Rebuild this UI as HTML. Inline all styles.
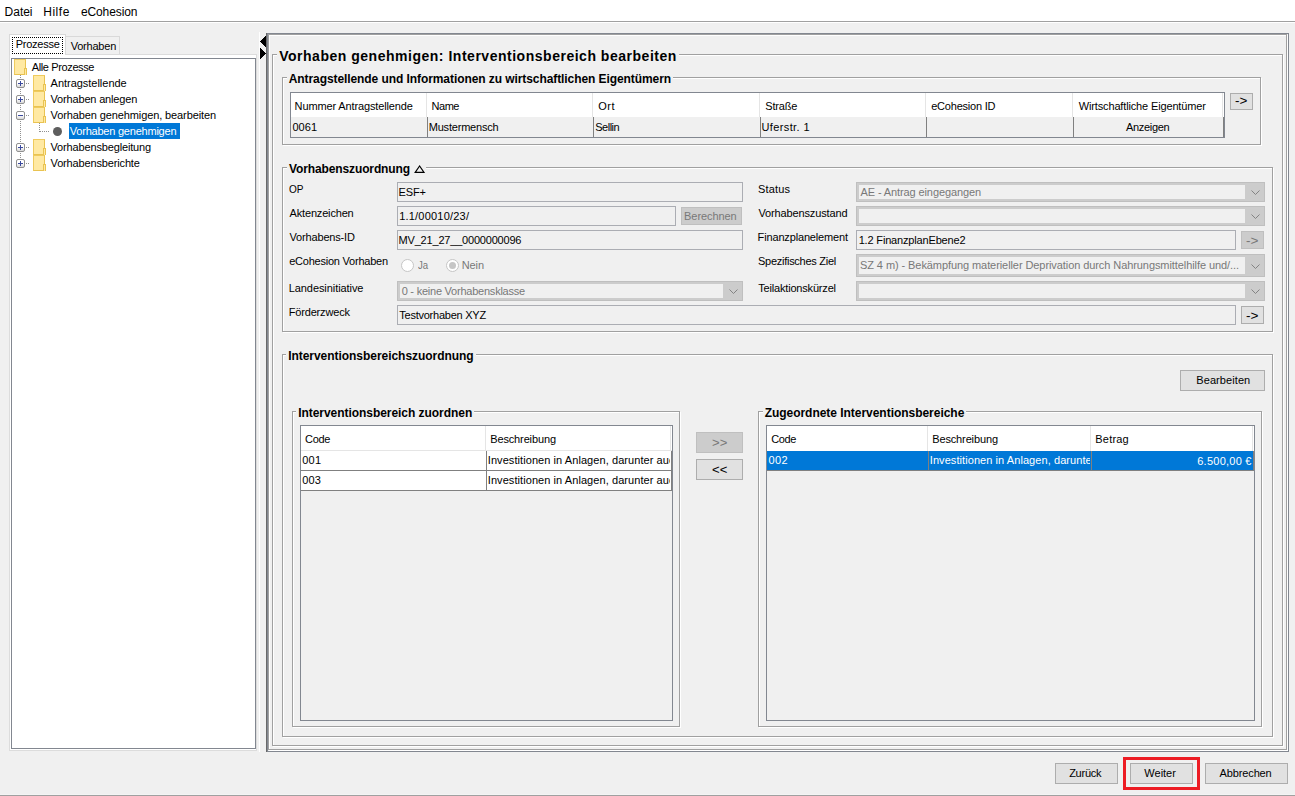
<!DOCTYPE html>
<html><head><meta charset="utf-8"><title>eCohesion</title>
<style>
*,*:before,*:after{box-sizing:border-box;margin:0;padding:0}
html,body{width:1295px;height:796px;overflow:hidden;background:#f0f0f0}
body{position:relative;font-family:"Liberation Sans",sans-serif;font-size:11px;color:#000}
.a{position:absolute}
.t{position:absolute;white-space:nowrap;line-height:14px;height:14px;font-size:11px}
.m{font-size:12px}
.b12{font-weight:bold;font-size:12px;background:#f0f0f0;padding:0 2px;margin-left:-2px}
.b14{font-weight:bold;font-size:14px;background:#f0f0f0;padding:0 2px;margin-left:-2px;line-height:16px;height:16px}
.dis{color:#787878}
.w{color:#fff}
/* etched group box: gray outer (top/left), white inner; bottom/right gray inner white outer */
.g{position:absolute;border:1px solid #a0a0a0;box-shadow:inset 1px 1px 0 #fff,1px 1px 0 #fff}
.fld{position:absolute;border:1px solid #abadb3;background:#f0f0f0}
.btn{position:absolute;border:1px solid #adadad;background:#e1e1e1}
.btnd{position:absolute;border:1px solid #bfbfbf;background:#cccccc}
.cmb{position:absolute;border:1px solid #bfbfbf;background:#cccccc}
.cmb i{position:absolute;left:2px;top:2px;bottom:2px;right:19px;background:#f0f0f0}
.cmb svg{position:absolute;right:4px;top:8px}
.tbl{position:absolute;border:1px solid #828790;background:#f0f0f0}
.hd{position:absolute;background:#fff}
.vs{position:absolute;width:1px;background:#808080}
.hs{position:absolute;height:1px;background:#808080}
.vl{position:absolute;width:1px;background:#e5e5e5}
.fold{position:absolute;width:12px;height:16px;background:#ffe9a3;border:1px solid #efcb5e;border-right-color:#e9c352;border-bottom-color:#e9c352}
.fold:after{content:"";position:absolute;left:9px;top:8px;width:3px;height:7px;background:#ffe9a3;border:1px solid #e9c352;border-bottom:0}
.pm{position:absolute;width:9px;height:9px;border:1px solid #919191;border-radius:2px;background:linear-gradient(#fff 40%,#d8d8d8)}
.pm:before{content:"";position:absolute;left:1px;top:3px;width:5px;height:1px;background:#3b4a9e}
.pm.plus:after{content:"";position:absolute;left:3px;top:1px;width:1px;height:5px;background:#3b4a9e}
.dv{position:absolute;width:1px;background-image:linear-gradient(#909090 50%,transparent 50%);background-size:1px 2px}
.dh{position:absolute;height:1px;background-image:linear-gradient(90deg,#909090 50%,transparent 50%);background-size:2px 1px}
</style></head>
<body>
<div class="a" style="left:0px;top:0px;width:1295px;height:21px;background:#ffffff;"></div>
<div class="a" style="left:0px;top:21px;width:1295px;height:1px;background:#a0a0a0;"></div>
<div class="a" style="left:0px;top:22px;width:1295px;height:1px;background:#ffffff;"></div>
<div class="a" style="left:0px;top:794px;width:1295px;height:1px;background:#f4f4f4;"></div>
<div class="a" style="left:0px;top:795px;width:1295px;height:1px;background:#a0a0a0;"></div>
<div class="a" style="left:9px;top:54px;width:248px;height:697px;background:#ffffff;border:1px solid #dcdcdc"></div>
<div class="a" style="left:66px;top:36px;width:54px;height:18px;background:#f0f0f0;border:1px solid #d9d9d9;border-left:0;border-bottom:0"></div>
<div class="a" style="left:9px;top:34px;width:57px;height:21px;background:#ffffff;border:1px solid #d9d9d9;border-bottom:0"></div>
<div class="a" style="left:12px;top:37px;width:51px;height:17px;border:1px dotted #000"></div>
<div class="a" style="left:11px;top:58px;width:245px;height:691px;background:#ffffff;border:1px solid #828790"></div>
<div class="fold" style="left:14px;top:59px"></div>
<div class="fold" style="left:33px;top:75px"></div>
<div class="fold" style="left:33px;top:91px"></div>
<div class="fold" style="left:33px;top:107px"></div>
<div class="fold" style="left:33px;top:139px"></div>
<div class="fold" style="left:33px;top:155px"></div>
<div class="dv" style="left:20px;top:75px;height:84px;background-position:0 0"></div>
<div class="dh" style="left:26px;top:83px;width:4px"></div>
<div class="dh" style="left:26px;top:99px;width:4px"></div>
<div class="dh" style="left:26px;top:115px;width:4px"></div>
<div class="dh" style="left:26px;top:147px;width:4px"></div>
<div class="dh" style="left:26px;top:163px;width:4px"></div>
<div class="pm plus" style="left:16px;top:79px"></div>
<div class="pm plus" style="left:16px;top:95px"></div>
<div class="pm" style="left:16px;top:111px"></div>
<div class="pm plus" style="left:16px;top:143px"></div>
<div class="pm plus" style="left:16px;top:159px"></div>
<div class="dv" style="left:39px;top:123px;height:9px;background-position:0 0"></div>
<div class="dh" style="left:40px;top:131px;width:10px"></div>
<div class="a" style="left:53px;top:127px;width:9px;height:9px;border-radius:50%;background:#5e5e5e"></div>
<div class="a" style="left:69px;top:123px;width:111px;height:16px;background:#0078d7;"></div>
<div class="a" style="left:259px;top:32px;width:1px;height:720px;background:#ffffff;"></div>
<svg class="a" style="left:260px;top:36px" width="6" height="23" viewBox="0 0 6 23" shape-rendering="crispEdges" fill="#000"><rect x="5" y="0" width="1" height="1"/><rect x="0" y="12" width="1" height="1"/><rect x="4" y="1" width="2" height="1"/><rect x="0" y="13" width="2" height="1"/><rect x="3" y="2" width="3" height="1"/><rect x="0" y="14" width="3" height="1"/><rect x="2" y="3" width="4" height="1"/><rect x="0" y="15" width="4" height="1"/><rect x="1" y="4" width="5" height="1"/><rect x="0" y="16" width="5" height="1"/><rect x="0" y="5" width="6" height="1"/><rect x="0" y="17" width="6" height="1"/><rect x="1" y="6" width="5" height="1"/><rect x="0" y="18" width="5" height="1"/><rect x="2" y="7" width="4" height="1"/><rect x="0" y="19" width="4" height="1"/><rect x="3" y="8" width="3" height="1"/><rect x="0" y="20" width="3" height="1"/><rect x="4" y="9" width="2" height="1"/><rect x="0" y="21" width="2" height="1"/><rect x="5" y="10" width="1" height="1"/><rect x="0" y="22" width="1" height="1"/></svg>
<div class="a" style="left:266px;top:33px;width:1px;height:719px;background:#696969;"></div>
<div class="a" style="left:267px;top:33px;width:1022px;height:719px;background:#f0f0f0;border:1px solid #828790"></div>
<div class="g" style="left:268px;top:34px;width:1019px;height:716px"></div>
<div class="g" style="left:272px;top:54px;width:1011px;height:692px"></div>
<div class="g" style="left:282px;top:77px;width:979px;height:68px"></div>
<div class="g" style="left:282px;top:167px;width:991px;height:165px"></div>
<div class="g" style="left:282px;top:354px;width:991px;height:383px"></div>
<div class="g" style="left:292px;top:411px;width:388px;height:316px"></div>
<div class="g" style="left:758px;top:411px;width:504px;height:316px"></div>
<div class="a" style="left:408px;top:165px;width:18px;height:6px;background:#f0f0f0;"></div>
<svg class="a" style="left:412px;top:163px" width="16" height="12" viewBox="412 163 16 12"><path d="M415.2 172.3L419.6 166L424 172.3Z" fill="none" stroke="#000" stroke-width="1.15"/></svg>
<div class="tbl" style="left:290px;top:92px;width:935px;height:46px"></div>
<div class="a" style="left:291px;top:93px;width:933px;height:24px;background:#ffffff;"></div>
<div class="vs" style="left:427px;top:117px;height:20px"></div>
<div class="vl" style="left:426px;top:93px;height:24px"></div>
<div class="vs" style="left:593px;top:117px;height:20px"></div>
<div class="vl" style="left:592px;top:93px;height:24px"></div>
<div class="vs" style="left:760px;top:117px;height:20px"></div>
<div class="vl" style="left:759px;top:93px;height:24px"></div>
<div class="vs" style="left:926px;top:117px;height:20px"></div>
<div class="vl" style="left:925px;top:93px;height:24px"></div>
<div class="vs" style="left:1073px;top:117px;height:20px"></div>
<div class="vl" style="left:1072px;top:93px;height:24px"></div>
<div class="vs" style="left:1223px;top:117px;height:20px"></div>
<div class="vl" style="left:1222px;top:93px;height:24px"></div>
<div class="btn" style="left:1230px;top:93px;width:23px;height:17px"></div>
<div class="fld" style="left:397px;top:182px;width:346px;height:20px"></div>
<div class="fld" style="left:397px;top:206px;width:279px;height:20px"></div>
<div class="btnd" style="left:681px;top:207px;width:61px;height:18px"></div>
<div class="fld" style="left:397px;top:230px;width:346px;height:20px"></div>
<div class="a" style="left:401px;top:259px;width:13px;height:13px;border-radius:50%;border:1px solid #c6c6c6;background:#fff"></div>
<div class="a" style="left:446px;top:259px;width:13px;height:13px;border-radius:50%;border:1px solid #c6c6c6;background:#fff"></div>
<div class="a" style="left:449px;top:262px;width:7px;height:7px;border-radius:50%;background:#c6c6c6"></div>
<div class="cmb" style="left:397px;top:281px;width:346px;height:20px"><i></i><svg width="9" height="5" viewBox="0 0 9 5" style="top:7px"><path d="M0.5 0.5L4.5 4.5L8.5 0.5" fill="none" stroke="#838383" stroke-width="1"/></svg></div>
<div class="fld" style="left:397px;top:305px;width:839px;height:20px"></div>
<div class="btn" style="left:1241px;top:306px;width:23px;height:18px"></div>
<div class="cmb" style="left:856px;top:182px;width:409px;height:20px"><i></i><svg width="9" height="5" viewBox="0 0 9 5" style="top:7px"><path d="M0.5 0.5L4.5 4.5L8.5 0.5" fill="none" stroke="#838383" stroke-width="1"/></svg></div>
<div class="cmb" style="left:856px;top:206px;width:409px;height:20px"><i></i><svg width="9" height="5" viewBox="0 0 9 5" style="top:7px"><path d="M0.5 0.5L4.5 4.5L8.5 0.5" fill="none" stroke="#838383" stroke-width="1"/></svg></div>
<div class="fld" style="left:856px;top:230px;width:380px;height:20px"></div>
<div class="btnd" style="left:1241px;top:231px;width:23px;height:18px"></div>
<div class="cmb" style="left:856px;top:254px;width:409px;height:23px"><i></i><svg width="9" height="5" viewBox="0 0 9 5" style="top:9px"><path d="M0.5 0.5L4.5 4.5L8.5 0.5" fill="none" stroke="#838383" stroke-width="1"/></svg></div>
<div class="cmb" style="left:856px;top:281px;width:409px;height:20px"><i></i><svg width="9" height="5" viewBox="0 0 9 5" style="top:7px"><path d="M0.5 0.5L4.5 4.5L8.5 0.5" fill="none" stroke="#838383" stroke-width="1"/></svg></div>
<div class="btn" style="left:1180px;top:370px;width:85px;height:21px"></div>
<div class="tbl" style="left:300px;top:425px;width:373px;height:296px"></div>
<div class="a" style="left:301px;top:426px;width:371px;height:65px;background:#ffffff;"></div>
<div class="vl" style="left:485px;top:426px;height:25px"></div>
<div class="vl" style="left:670px;top:426px;height:25px"></div>
<div class="a" style="left:301px;top:450px;width:371px;height:1px;background:#e5e5e5"></div>
<div class="vs" style="left:486px;top:451px;height:40px"></div>
<div class="vs" style="left:671px;top:451px;height:40px"></div>
<div class="hs" style="left:301px;top:470px;width:371px"></div>
<div class="hs" style="left:301px;top:490px;width:371px"></div>
<div class="btnd" style="left:696px;top:432px;width:47px;height:21px"></div>
<div class="btn" style="left:696px;top:459px;width:47px;height:21px"></div>
<div class="tbl" style="left:766px;top:425px;width:489px;height:296px"></div>
<div class="a" style="left:767px;top:426px;width:487px;height:25px;background:#ffffff;"></div>
<div class="vl" style="left:927px;top:426px;height:25px"></div>
<div class="vl" style="left:1090px;top:426px;height:25px"></div>
<div class="vl" style="left:1252px;top:426px;height:25px"></div>
<div class="a" style="left:767px;top:451px;width:487px;height:19px;background:#0078d7;"></div>
<div class="hs" style="left:767px;top:470px;width:487px"></div>
<div class="vs" style="left:928px;top:451px;height:20px"></div>
<div class="vs" style="left:1091px;top:451px;height:20px"></div>
<div class="vs" style="left:1253px;top:451px;height:20px"></div>
<div class="btn" style="left:1055px;top:763px;width:63px;height:21px"></div>
<div class="btn" style="left:1130px;top:763px;width:63px;height:21px"></div>
<div class="btn" style="left:1205px;top:763px;width:83px;height:21px"></div>
<div class="a" style="left:1123px;top:757px;width:77px;height:33px;border:3px solid #ed1c24"></div>
<span id="t0" class="t m" style="left:4.62px;top:5px;letter-spacing:-0.030px;">Datei</span>
<span id="t1" class="t m" style="left:43.22px;top:5px;letter-spacing:0.528px;">Hilfe</span>
<span id="t2" class="t m" style="left:80.89px;top:5px;letter-spacing:-0.098px;">eCohesion</span>
<span id="t3" class="t " style="left:15.70px;top:37px;letter-spacing:-0.252px;">Prozesse</span>
<span id="t4" class="t " style="left:70.65px;top:39px;letter-spacing:-0.206px;">Vorhaben</span>
<span id="t5" class="t " style="left:31.78px;top:60px;letter-spacing:-0.378px;">Alle Prozesse</span>
<span id="t6" class="t " style="left:50.58px;top:76px;letter-spacing:-0.024px;">Antragstellende</span>
<span id="t7" class="t " style="left:50.55px;top:92px;letter-spacing:-0.170px;">Vorhaben anlegen</span>
<span id="t8" class="t " style="left:50.55px;top:108px;letter-spacing:-0.108px;">Vorhaben genehmigen, bearbeiten</span>
<span id="t9" class="t w" style="left:69.85px;top:124px;letter-spacing:-0.225px;">Vorhaben genehmigen</span>
<span id="t10" class="t " style="left:50.55px;top:140px;letter-spacing:-0.156px;">Vorhabensbegleitung</span>
<span id="t11" class="t " style="left:50.55px;top:156px;letter-spacing:-0.150px;">Vorhabensberichte</span>
<span id="t12" class="t b14" style="left:279.20px;top:48px;letter-spacing:0.516px;">Vorhaben genehmigen: Interventionsbereich bearbeiten</span>
<span id="t13" class="t b12" style="left:288.70px;top:72px;letter-spacing:-0.077px;">Antragstellende und Informationen zu wirtschaftlichen Eigentümern</span>
<span id="t14" class="t b12" style="left:288.92px;top:162px;letter-spacing:-0.112px;">Vorhabenszuordnung</span>
<span id="t15" class="t b12" style="left:288.20px;top:349px;letter-spacing:-0.041px;">Interventionsbereichszuordnung</span>
<span id="t16" class="t b12" style="left:298.20px;top:406px;letter-spacing:-0.047px;">Interventionsbereich zuordnen</span>
<span id="t17" class="t b12" style="left:764.64px;top:406px;letter-spacing:-0.032px;">Zugeordnete Interventionsbereiche</span>
<span id="t18" class="t " style="left:294.60px;top:99px;letter-spacing:-0.132px;">Nummer Antragstellende</span>
<span id="t19" class="t " style="left:431.50px;top:99px;letter-spacing:-0.450px;">Name</span>
<span id="t20" class="t " style="left:598.18px;top:99px;letter-spacing:0.563px;">Ort</span>
<span id="t21" class="t " style="left:765.20px;top:99px;letter-spacing:-0.144px;">Straße</span>
<span id="t22" class="t " style="left:931.23px;top:99px;letter-spacing:-0.214px;">eCohesion ID</span>
<span id="t23" class="t " style="left:1078.75px;top:99px;letter-spacing:-0.148px;">Wirtschaftliche Eigentümer</span>
<span id="t24" class="t " style="left:292.47px;top:120px;letter-spacing:0.032px;">0061</span>
<span id="t25" class="t " style="left:428.70px;top:120px;letter-spacing:-0.192px;">Mustermensch</span>
<span id="t26" class="t " style="left:595.20px;top:120px;letter-spacing:-0.478px;">Sellin</span>
<span id="t27" class="t " style="left:761.55px;top:120px;letter-spacing:0.373px;">Uferstr. 1</span>
<span id="t28" class="t " style="left:1125.98px;top:120px;letter-spacing:-0.305px;">Anzeigen</span>
<span id="t29" class="t " style="left:1234.60px;top:94px;transform:scale(1.225,1.15);transform-origin:0 8px;">-&gt;</span>
<span id="t30" class="t " style="left:289.12px;top:182px;transform:scale(0.913,1.0);transform-origin:0 8px;">OP</span>
<span id="t31" class="t " style="left:289.58px;top:206px;letter-spacing:-0.173px;">Aktenzeichen</span>
<span id="t32" class="t " style="left:289.55px;top:230px;letter-spacing:-0.172px;">Vorhabens-ID</span>
<span id="t33" class="t " style="left:289.13px;top:254px;letter-spacing:-0.222px;">eCohesion Vorhaben</span>
<span id="t34" class="t " style="left:288.70px;top:281px;letter-spacing:-0.069px;">Landesinitiative</span>
<span id="t35" class="t " style="left:288.70px;top:305px;letter-spacing:-0.167px;">Förderzweck</span>
<span id="t36" class="t " style="left:398.60px;top:185px;letter-spacing:-0.124px;">ESF+</span>
<span id="t37" class="t " style="left:399.16px;top:209px;letter-spacing:0.213px;">1.1/00010/23/</span>
<span id="t38" class="t " style="left:398.60px;top:233px;letter-spacing:-0.196px;">MV_21_27__0000000096</span>
<span id="t39" class="t dis" style="left:417.85px;top:258px;transform:scale(0.874,1.0);transform-origin:0 8px;">Ja</span>
<span id="t40" class="t dis" style="left:461.70px;top:258px;letter-spacing:-0.069px;">Nein</span>
<span id="t41" class="t dis" style="left:401.67px;top:284px;letter-spacing:-0.230px;">0 - keine Vorhabensklasse</span>
<span id="t42" class="t " style="left:399.25px;top:308px;letter-spacing:-0.241px;">Testvorhaben XYZ</span>
<span id="t43" class="t dis" style="left:684.10px;top:209px;letter-spacing:-0.074px;">Berechnen</span>
<span id="t44" class="t " style="left:758.00px;top:182px;letter-spacing:0.142px;">Status</span>
<span id="t45" class="t " style="left:758.45px;top:206px;letter-spacing:-0.132px;">Vorhabenszustand</span>
<span id="t46" class="t " style="left:757.60px;top:230px;letter-spacing:-0.154px;">Finanzplanelement</span>
<span id="t47" class="t " style="left:758.00px;top:254px;letter-spacing:-0.269px;">Spezifisches Ziel</span>
<span id="t48" class="t " style="left:758.25px;top:281px;letter-spacing:-0.184px;">Teilaktionskürzel</span>
<span id="t49" class="t dis" style="left:860.48px;top:185px;letter-spacing:-0.105px;">AE - Antrag eingegangen</span>
<span id="t50" class="t " style="left:858.66px;top:233px;letter-spacing:-0.168px;">1.2 FinanzplanEbene2</span>
<span id="t51" class="t dis" style="left:860.00px;top:258px;letter-spacing:-0.080px;">SZ 4 m) - Bekämpfung materieller Deprivation durch Nahrungsmittelhilfe und/...</span>
<span id="t52" class="t dis" style="left:1246.20px;top:234px;transform:scale(1.236,1.15);transform-origin:0 8px;">-&gt;</span>
<span id="t53" class="t " style="left:1246.20px;top:309px;transform:scale(1.236,1.15);transform-origin:0 8px;">-&gt;</span>
<span id="t54" class="t " style="left:1196.30px;top:373px;letter-spacing:0.079px;">Bearbeiten</span>
<span id="t55" class="t " style="left:304.94px;top:432px;letter-spacing:-0.250px;">Code</span>
<span id="t56" class="t " style="left:490.20px;top:432px;letter-spacing:-0.132px;">Beschreibung</span>
<span id="t57" class="t " style="left:302.27px;top:453px;letter-spacing:0.207px;">001</span>
<span id="t58" class="t " style="left:302.27px;top:473px;letter-spacing:0.180px;">003</span>
<span id="t59" class="t " style="left:487.78px;top:453px;letter-spacing:0.072px;width:182.2px;overflow:hidden;">Investitionen in Anlagen, darunter auch</span>
<span id="t60" class="t " style="left:487.78px;top:473px;letter-spacing:0.072px;width:182.2px;overflow:hidden;">Investitionen in Anlagen, darunter auch</span>
<span id="t61" class="t dis" style="left:711.75px;top:436px;transform:scale(1.190,1.15);transform-origin:0 8px;">&gt;&gt;</span>
<span id="t62" class="t " style="left:711.75px;top:463px;transform:scale(1.190,1.15);transform-origin:0 8px;">&lt;&lt;</span>
<span id="t63" class="t " style="left:771.14px;top:432px;letter-spacing:-0.317px;">Code</span>
<span id="t64" class="t " style="left:932.20px;top:432px;letter-spacing:-0.132px;">Beschreibung</span>
<span id="t65" class="t " style="left:1095.30px;top:432px;letter-spacing:0.200px;">Betrag</span>
<span id="t66" class="t w" style="left:768.57px;top:453px;letter-spacing:0.315px;">002</span>
<span id="t67" class="t w" style="left:929.78px;top:453px;letter-spacing:0.072px;width:160.2px;overflow:hidden;">Investitionen in Anlagen, darunter auch</span>
<span id="t68" class="t w" style="left:1197.24px;top:454px;letter-spacing:0.247px;">6.500,00 €</span>
<span id="t69" class="t " style="left:1069.15px;top:766px;letter-spacing:-0.237px;">Zurück</span>
<span id="t70" class="t " style="left:1144.35px;top:766px;letter-spacing:-0.010px;">Weiter</span>
<span id="t71" class="t " style="left:1219.58px;top:766px;letter-spacing:-0.134px;">Abbrechen</span>
</body></html>
